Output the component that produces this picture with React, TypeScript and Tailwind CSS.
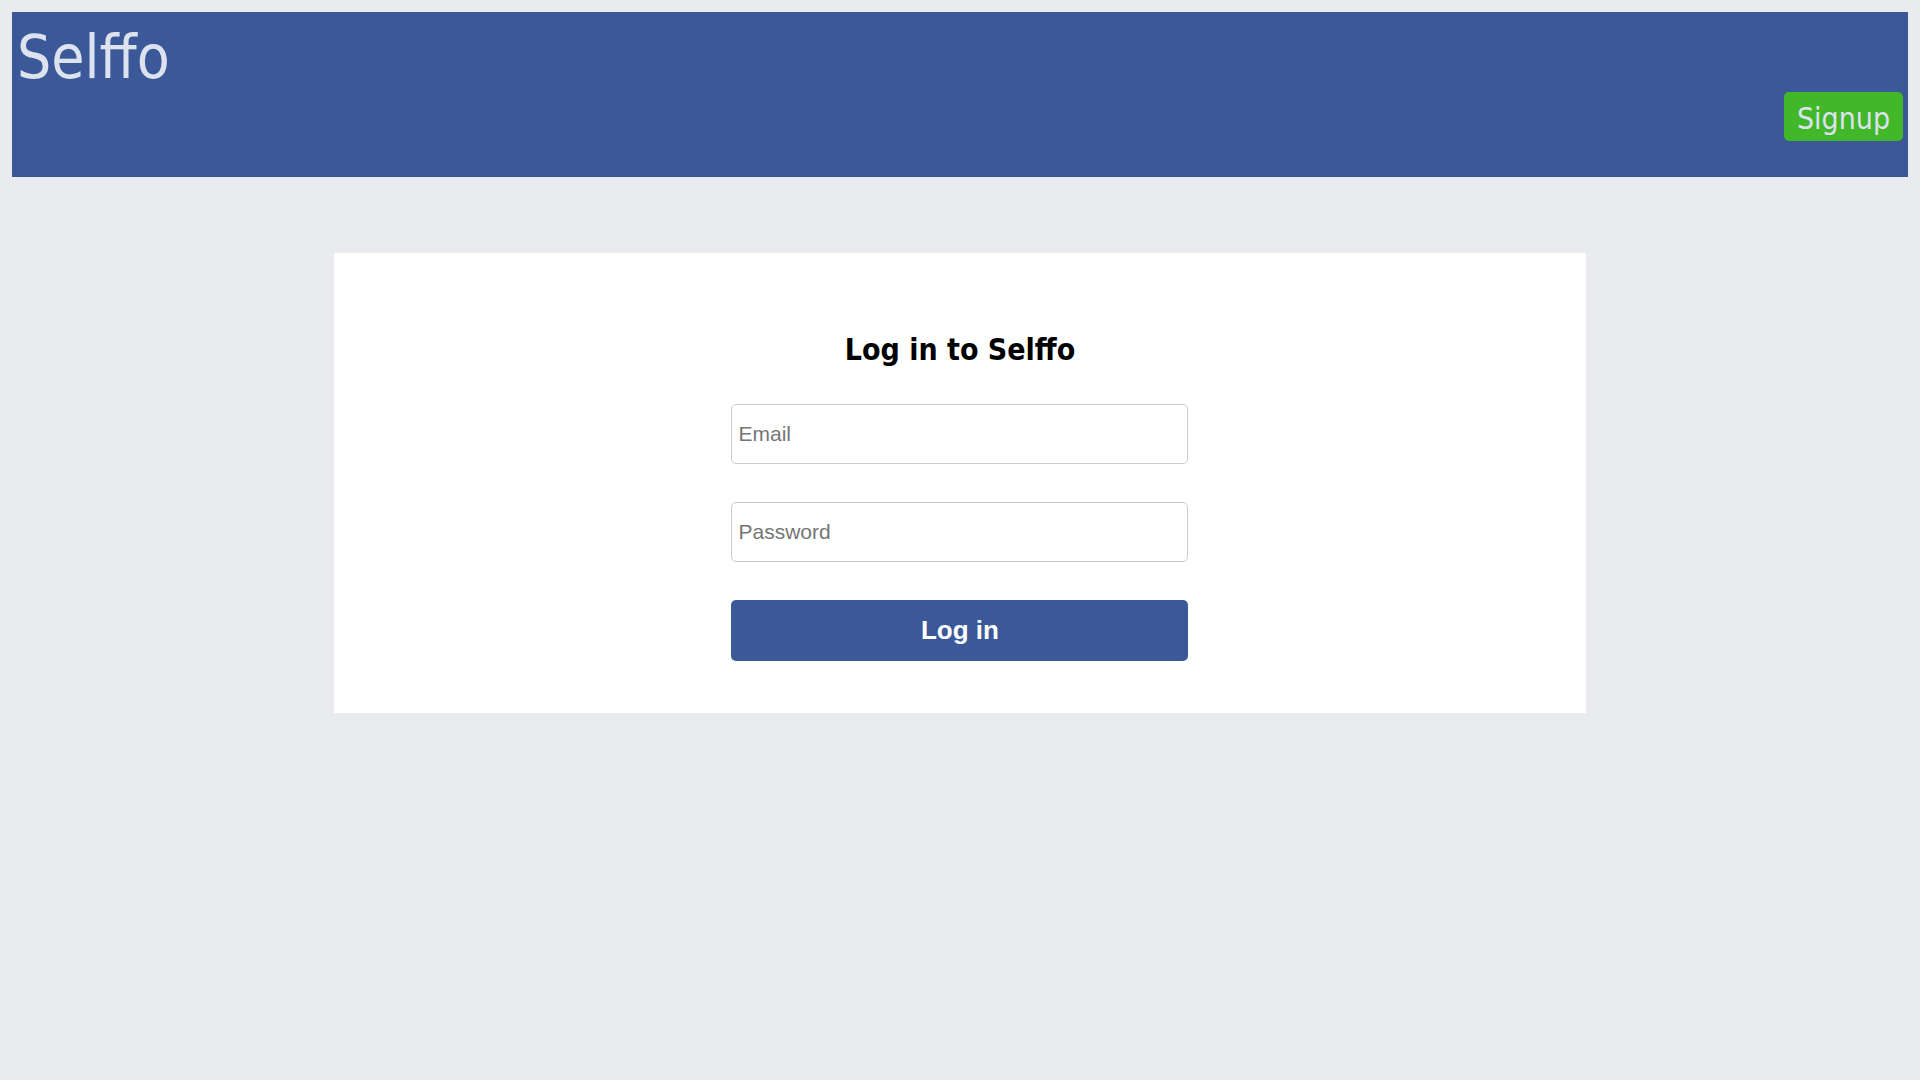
import React from 'react';

const App: React.FC = () => {
  return (
    <div className="min-h-screen bg-[#e9ebee] p-3 font-['DejaVu_Sans_Condensed','DejaVu_Sans',sans-serif]">
      {/* Top bar */}
      <header className="h-[165px] bg-[#3b5998] flex justify-between items-start">
        <div className="pl-[5px] pt-[10px] text-[60px] leading-[70px] text-[#dde3ee]">Selffo</div>
        <button className="mt-[80px] mr-[5px] w-[119px] h-[49px] pt-[4px] rounded-[5px] bg-[#42b72a] text-[30px] leading-[44px] text-[#dde3ee] text-center">
          Signup
        </button>
      </header>

      {/* Login card */}
      <div className="w-[66%] mx-auto mt-[76px] bg-white pt-[79px] pb-[52px]">
        <h1 className="text-center text-[30px] leading-[36px] font-bold text-black">Log in to Selffo</h1>
        <form className="w-[457px] mx-auto mt-[36px] flex flex-col gap-[38px] font-['Liberation_Sans',Arial,sans-serif]">
          <input
            type="email"
            placeholder="Email"
            className="h-[60px] w-full border border-[#cccccc] rounded-[5px] pl-[6px] text-[21px] text-black placeholder:text-[#757575] outline-none"
          />
          <input
            type="password"
            placeholder="Password"
            className="h-[60px] w-full border border-[#cccccc] rounded-[5px] pl-[6px] text-[21px] text-black placeholder:text-[#757575] outline-none"
          />
          <button type="button" className="h-[61px] w-full rounded-[5px] bg-[#3b5998] text-white text-[26px] font-bold">
            Log in
          </button>
        </form>
      </div>
    </div>
  );
};

export default App;
